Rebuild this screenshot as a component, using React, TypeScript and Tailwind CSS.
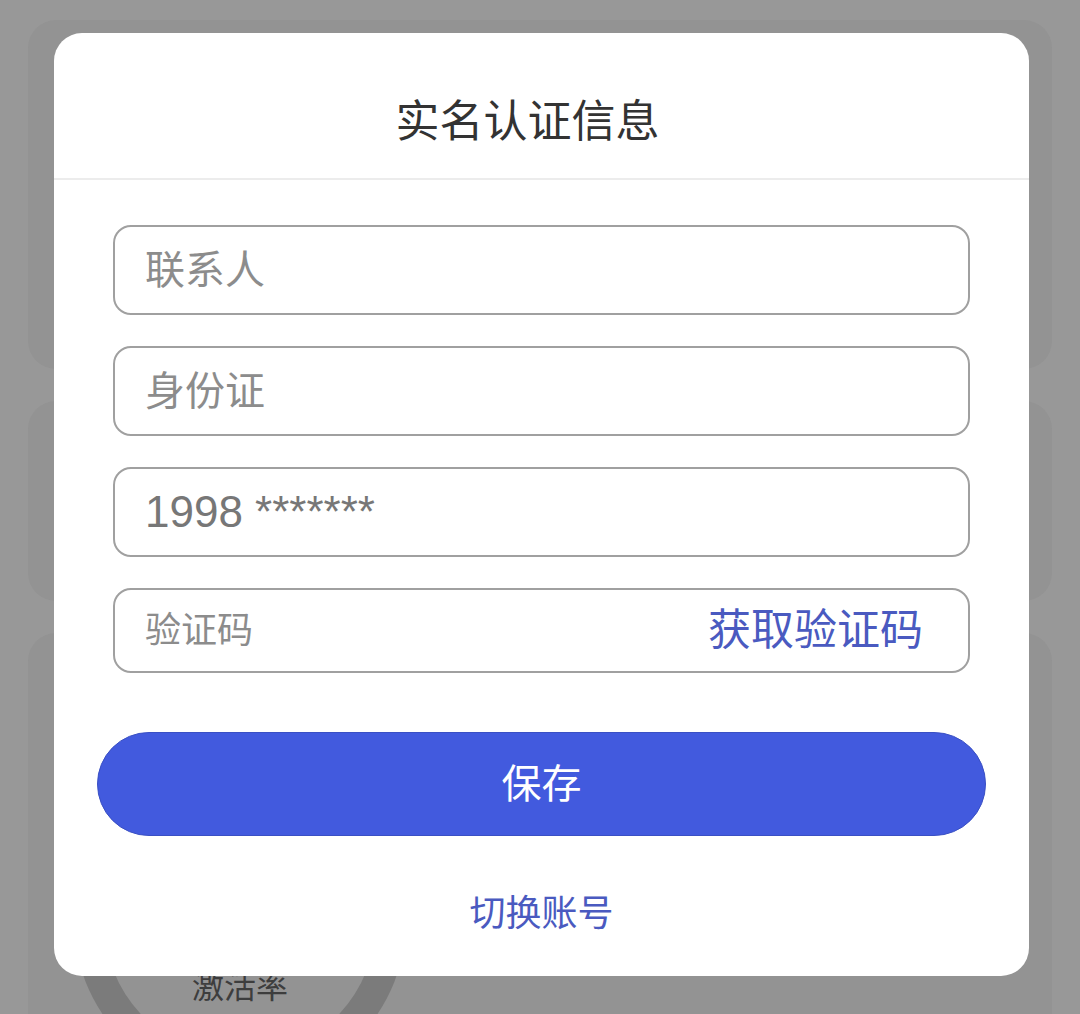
import React from "react";

const fontStack =
  "font-['Liberation_Sans','Noto_Sans_CJK_SC',sans-serif]";

function Field({
  placeholder,
  value,
  className = "",
  children,
}: {
  placeholder?: string;
  value?: string;
  className?: string;
  children?: React.ReactNode;
}) {
  return (
    <div
      className={`flex items-center rounded-[18px] border-[2.5px] border-[#a0a0a0] bg-white pl-[30px] pr-[45px] ${className}`}
    >
      <input
        readOnly
        placeholder={placeholder}
        defaultValue={value}
        className={`min-w-0 flex-1 bg-transparent text-[40px] text-[#777] outline-none placeholder:text-[#8c8c8c] ${fontStack}`}
      />
      {children}
    </div>
  );
}

export default function App() {
  return (
    <div
      className={`relative h-[1014px] w-full overflow-hidden bg-[#989898] ${fontStack}`}
    >
      {/* dimmed page behind the dialog */}
      <div className="flex flex-col gap-[32px] px-[28px] pt-[20px]">
        <div className="h-[349px] rounded-[28px] bg-[#939393]" />
        <div className="h-[200px] rounded-[28px] bg-[#939393]" />
        <div className="flex h-[420px] items-start rounded-[28px] bg-[#939393] pl-[46px] pt-[122px]">
          <div className="flex h-[332px] w-[332px] shrink-0 flex-col items-center rounded-full border-[30px] border-[#7b7b7b]">
            <span className="mt-[186px] text-[32px] leading-none text-[#3d3d3d]">
              激活率
            </span>
          </div>
          <span className="ml-[169px] mt-[182px] text-[36px] leading-none text-[#3d3d3d]">
            当日新增
          </span>
        </div>
      </div>

      {/* dialog */}
      <div className="absolute left-[54px] top-[33px] flex h-[943px] w-[975px] flex-col rounded-[28px] bg-white">
        <div className="flex h-[147px] items-center justify-center border-b-2 border-[#ececec] pr-[28px] pt-[32px]">
          <h2 className="text-[44px] leading-none text-[#333]">
            实名认证信息
          </h2>
        </div>

        <div className="flex flex-col gap-[31px] px-[59px] pt-[45px]">
          <Field placeholder="联系人" className="h-[90px]" />
          <Field placeholder="身份证" className="h-[90px]" />
          <Field value="1998 *******" className="h-[90px] [&_input]:text-[44px]" />
          <Field placeholder="验证码" className="h-[85px] [&_input]:text-[36px]">
            <button className="shrink-0 text-[43px] leading-none text-[#4a5ac0]">
              获取验证码
            </button>
          </Field>
        </div>

        <div className="px-[43px] pt-[59px]">
          <button className="flex h-[104px] w-full items-center justify-center rounded-full border border-[#3a50c4] bg-[#425ade] text-[40px] text-white">
            保存
          </button>
        </div>

        <div className="flex justify-center pt-[60px]">
          <button className="text-[36px] leading-none text-[#4a5ac0]">
            切换账号
          </button>
        </div>
      </div>
    </div>
  );
}
